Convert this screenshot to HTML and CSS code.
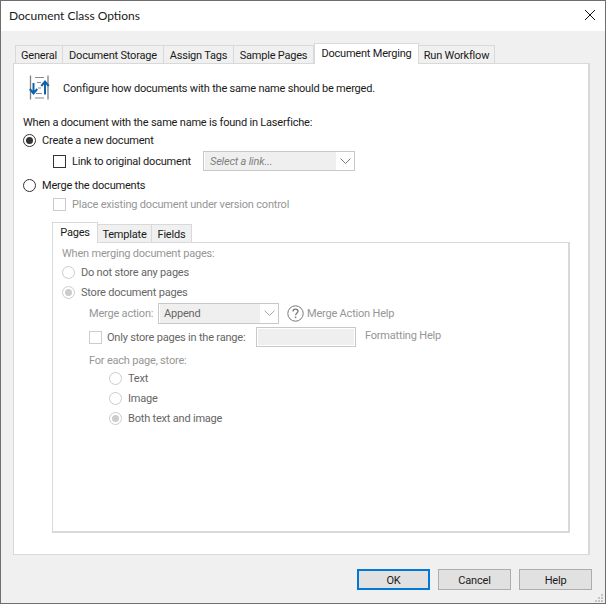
FILE: index.html
```html
<!DOCTYPE html>
<html lang="en">
<head>
<meta charset="utf-8">
<title>Document Class Options</title>
<link rel="stylesheet" href="styles.css">
</head>
<body>
<div class="window">
  <header class="titlebar">
    <span class="title">Document Class Options</span>
    <svg class="close" width="12" height="12" viewBox="0 0 12 12"><path d="M1 1 L11 11 M11 1 L1 11" stroke="#111" stroke-width="1" fill="none"/></svg>
  </header>
  <main class="content">
    <nav class="tabs">
      <span class="tab w-general">General</span>
      <span class="tab w-storage">Document Storage</span>
      <span class="tab w-tags">Assign Tags</span>
      <span class="tab w-sample">Sample Pages</span>
      <span class="tab active w-merging">Document Merging</span>
      <span class="tab w-workflow">Run Workflow</span>
    </nav>
    <section class="panel">
      <div class="intro">
        <svg class="intro-icon" width="21" height="25" viewBox="0 0 21 25">
          <path d="M1.5 0.5V24.5M19 0.5V24.5" stroke="#808080" stroke-width="1.3" fill="none"/>
          <path d="M6 2.5H15M8 7.5H12M9 13H12M7 18.5H13M6 23H15" stroke="#8a8a8a" stroke-width="1.1" fill="none"/>
          <path d="M4.5 8V18M0.8 14L4.5 18.5L8.2 14" stroke="#0f62b0" stroke-width="2" fill="none"/>
          <path d="M16 19.5V7M12.3 11L16 6.5L19.7 11" stroke="#0f62b0" stroke-width="2" fill="none"/>
        </svg>
        <span class="intro-text">Configure how documents with the same name should be merged.</span>
      </div>
      <div class="row question">When a document with the same name is found in Laserfiche:</div>
      <div class="row option"><span class="radio on"></span><span>Create a new document</span></div>
      <div class="row sub link-row">
        <span class="check"></span><span class="link-label">Link to original document</span>
        <span class="select link-select"><i>Select a link...</i><span class="chev"><svg width="11" height="6" viewBox="0 0 11 6"><path d="M0.5 0.5L5.5 5.5L10.5 0.5" stroke="#777" fill="none"/></svg></span></span>
      </div>
      <div class="row option merge"><span class="radio"></span><span>Merge the documents</span></div>
      <div class="row sub version dim"><span class="check off"></span><span class="link-label">Place existing document under version control</span></div>

      <nav class="tabs inner-tabs">
        <span class="tab active w-pages">Pages</span>
        <span class="tab w-template">Template</span>
        <span class="tab w-fields">Fields</span>
      </nav>
      <section class="inner-panel dim">
        <div class="row when">When merging document pages:</div>
        <div class="row store"><span class="radio off"></span><span>Do not store any pages</span></div>
        <div class="row store"><span class="radio off on"></span><span>Store document pages</span></div>
        <div class="row action">
          <span class="action-label">Merge action:</span>
          <span class="select action-select"><span>Append</span><span class="chev"><svg width="11" height="6" viewBox="0 0 11 6"><path d="M0.5 0.5L5.5 5.5L10.5 0.5" stroke="#aaa" fill="none"/></svg></span></span>
          <svg class="help" width="17" height="17" viewBox="0 0 17 17"><circle cx="8.5" cy="8.5" r="7.7" stroke="#777" stroke-width="1" fill="none"/><path d="M6 6.6C6 4.9 7.2 4.1 8.5 4.1C9.9 4.1 11 5 11 6.3C11 7.9 8.6 8 8.6 10.3" stroke="#777" stroke-width="1.3" fill="none"/><rect x="7.9" y="11.6" width="1.4" height="1.5" fill="#777"/></svg>
          <span class="help-text">Merge Action Help</span>
        </div>
        <div class="row range">
          <span class="check off"></span><span class="range-label">Only store pages in the range:</span>
          <span class="range-input"></span>
          <span class="format-help">Formatting Help</span>
        </div>
        <div class="row each">For each page, store:</div>
        <div class="row kind"><span class="radio off"></span><span>Text</span></div>
        <div class="row kind"><span class="radio off"></span><span>Image</span></div>
        <div class="row kind"><span class="radio off on"></span><span>Both text and image</span></div>
      </section>
    </section>
    <footer class="buttons">
      <span class="button default">OK</span>
      <span class="button">Cancel</span>
      <span class="button">Help</span>
    </footer>
    <svg class="grip" width="10" height="10" viewBox="0 0 10 10"><path d="M7 1h2v2H7zM4 4h2v2H4zM7 4h2v2H7zM1 7h2v2H1zM4 7h2v2H4zM7 7h2v2H7z" fill="#c4c4c4"/></svg>
  </main>
</div>
</body>
</html>
```
FILE: styles.css
```css
* { box-sizing: border-box; }
html, body { margin: 0; padding: 0; }
body {
  width: 606px;
  height: 604px;
  overflow: hidden;
  font-family: "Roboto", "Liberation Sans", sans-serif;
  font-size: 11px;
  letter-spacing: -0.2px;
  color: #1a1a1a;
  background: #f0f0f0;
}
.window {
  width: 606px;
  height: 604px;
  border: 1px solid #6e6e6e;
  display: flex;
  flex-direction: column;
  background: #f0f0f0;
}
.titlebar {
  height: 30px;
  flex: none;
  background: #fff;
  display: flex;
  align-items: center;
  justify-content: space-between;
  padding: 0 9px 0 8px;
}
.title { font-family: "Lato", sans-serif; font-size: 12px; letter-spacing: 0; margin-top: -2px; }
.close { display: block; margin-top: -2px; }
.content {
  flex: 1;
  position: relative;
  padding: 12px 0 0 12px;
}
.tabs { display: flex; height: 20px; padding-left: 2px; align-items: flex-end; }
.tab {
  height: 18px;
  display: flex;
  align-items: center;
  justify-content: center;
  padding-top: 1px;
  background: #f0f0f0;
  border: 1px solid #d9d9d9;
  border-bottom: 0;
  border-left-width: 0;
  white-space: nowrap;
}
.tab:first-child { border-left-width: 1px; }
.tab.active {
  height: 21px;
  margin-bottom: -1px;
  background: #fff;
  border-left-width: 1px;
  padding: 0 0 1px;
  position: relative;
  z-index: 1;
}
.w-general { width: 48px; }
.w-storage { width: 101px; }
.w-tags { width: 70px; }
.w-sample { width: 80px; }
.w-merging { width: 105px; }
.w-workflow { width: 76px; }
.w-pages { width: 46px; }
.w-template { width: 54px; }
.w-fields { width: 40px; }
.panel {
  width: 577px;
  height: 492px;
  background: #fff;
  border: 1px solid #d9d9d9;
  border-width: 1px 2px 1px 1px;
  padding: 11px 0 0 9px;
}
.intro { display: flex; align-items: center; height: 25px; padding-left: 6px; }
.intro-icon { flex: none; margin-right: 13px; }
.intro-text { padding-top: 1px; }
.row { display: flex; align-items: center; height: 18px; white-space: nowrap; }
.question { margin-top: 13px; }
.radio {
  width: 13px;
  height: 13px;
  flex: none;
  border: 1px solid #333;
  border-radius: 50%;
  background: #fff;
  margin-right: 6px;
  display: flex;
  align-items: center;
  justify-content: center;
}
.radio.on::after {
  content: "";
  width: 7px;
  height: 7px;
  border-radius: 50%;
  background: #333;
}
.radio.off { border-color: #ccc; }
.radio.off.on::after { background: #ccc; }
.check {
  width: 13px;
  height: 13px;
  flex: none;
  border: 1px solid #333;
  background: #fff;
}
.check.off { border-color: #ccc; }
.sub { padding-left: 30px; }
.link-row { height: 20px; margin-top: 2px; }
.link-label { margin-left: 6px; width: 131px; }
.select {
  display: flex;
  align-items: center;
  height: 20px;
  border: 1px solid #c8c8c8;
  background: #fff;
  padding-left: 1px;
}
.select > :first-child {
  flex: 1;
  align-self: stretch;
  display: flex;
  align-items: center;
  background: #efefef;
  padding-left: 5px;
}
.select > i { color: #808080; font-style: italic; }
.chev { width: 18px; flex: none; display: flex; justify-content: center; }
.link-select { width: 152px; }
.merge { margin-top: 5px; }
.version { margin-top: 1px; }
.dim, .dim .row { color: #969696; }
.inner-tabs { margin: 9px 0 0 27px; padding-left: 2px; height: 20px; }
.inner-tabs .tab { color: #1a1a1a; }
.inner-panel {
  width: 518px;
  height: 291px;
  margin-left: 29px;
  background: #fff;
  border: 1px solid #d9d9d9;
  border-width: 1px 2px 2px 1px;
  padding: 2px 0 0 9px;
}
.when { height: 17px; }
.store { height: 20px; }
.store > span:last-child, .kind > span:last-child { color: #666; }
.action { height: 22px; padding-left: 27px; }
.action-label { width: 69px; }
.action-select { width: 121px; height: 21px; }
.action-select > :first-child { color: #666; padding-left: 4px; }
.help { margin-left: 8px; margin-right: 3px; flex: none; }
.range { height: 22px; margin-top: 2px; padding-left: 27px; }
.range-label { margin-left: 5px; width: 149px; color: #666; }
.range-input {
  width: 100px;
  height: 20px;
  border: 1px solid #c8c8c8;
  background: #efefef;
  box-shadow: inset 0 0 0 1px #fff;
}
.format-help { margin-left: 9px; margin-top: -4px; }
.each { margin-top: 4px; padding-left: 27px; height: 16px; }
.kind { height: 20px; padding-left: 47px; }
.buttons {
  display: flex;
  justify-content: flex-end;
  gap: 8px;
  margin-top: 14px;
  padding-right: 13px;
}
.button {
  width: 73px;
  height: 21px;
  display: flex;
  align-items: center;
  justify-content: center;
  padding-top: 1px;
  background: #e1e1e1;
  border: 1px solid #adadad;
}
.button.default { border: 2px solid #0078d7; }
.grip { position: absolute; right: 1px; bottom: 0; }
```
